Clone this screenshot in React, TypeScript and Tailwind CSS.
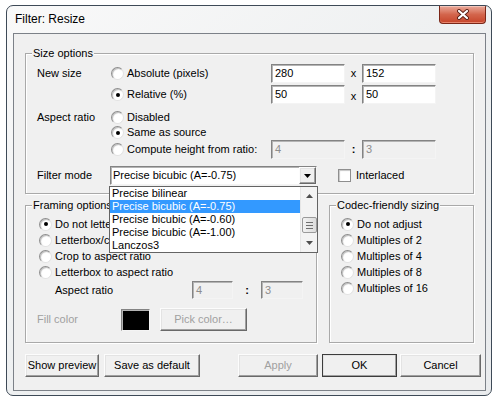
import clsx from 'clsx';
import type { ReactNode } from 'react';

const sunken =
  'border border-t-[#838383] border-l-[#838383] border-r-[#f4f4f4] border-b-[#f4f4f4] shadow-[inset_1px_1px_0_#b4b4b4]';
const raised =
  'border border-t-[#fcfcfc] border-l-[#fcfcfc] border-r-[#696969] border-b-[#696969] shadow-[inset_-1px_-1px_0_#a0a0a0,inset_1px_1px_0_#e3e3e3] bg-[#f0f0f0]';

function Radio({ checked }: { checked?: boolean }) {
  return (
    <span className="w-[13px] h-[13px] rounded-full border border-t-[#8e8e8e] border-l-[#8e8e8e] border-r-[#e2e2e2] border-b-[#e2e2e2] bg-white shadow-[inset_1px_1px_1px_#bdbdbd] flex items-center justify-center shrink-0">
      {checked && <span className="w-[4px] h-[4px] rounded-full bg-black" />}
    </span>
  );
}

function RadioRow({ label, checked, className }: { label: string; checked?: boolean; className?: string }) {
  return (
    <span className={clsx('flex items-center gap-[3px] whitespace-nowrap', className)}>
      <Radio checked={checked} />
      <span>{label}</span>
    </span>
  );
}

function Field({ value, disabled, className }: { value: string; disabled?: boolean; className?: string }) {
  return (
    <span
      className={clsx(
        'flex items-center pl-[3px] shrink-0',
        sunken,
        disabled ? 'bg-[#f0f0f0] text-[#8d8d8d]' : 'bg-white',
        className,
      )}
    >
      {value}
    </span>
  );
}

function Group({ title, className, children }: { title: string; className?: string; children: ReactNode }) {
  return (
    <div className={clsx('relative border border-[#a9a9a9] shadow-[inset_1px_1px_0_#fff,1px_1px_0_#fff] shrink-0', className)}>
      <span className="absolute left-[6px] -top-[8px] px-[1px] bg-[#f0f0f0] leading-[14px] whitespace-nowrap">{title}</span>
      {children}
    </div>
  );
}

function Button({ children, className, disabled }: { children: ReactNode; className?: string; disabled?: boolean }) {
  return (
    <button className={clsx('h-[23px] flex items-center justify-center shrink-0', raised, disabled && 'text-[#a0a0a0]', className)}>
      {children}
    </button>
  );
}

function Arrow({ up }: { up?: boolean }) {
  return (
    <svg width="7" height="4" viewBox="0 0 7 4">
      <path d={up ? 'M0 4 L3.5 0 L7 4 Z' : 'M0 0 L7 0 L3.5 4 Z'} fill="#4d4d4d" />
    </svg>
  );
}

const modes = [
  'Precise bilinear',
  'Precise bicubic (A=-0.75)',
  'Precise bicubic (A=-0.60)',
  'Precise bicubic (A=-1.00)',
  'Lanczos3',
];

export default function App() {
  return (
    <div className="w-[498px] h-[399px] bg-white pl-[6px] pt-[5px] font-['Liberation_Sans',Arial,sans-serif] text-[11px] text-black leading-[13px]">
      <div className="w-[486px] h-[391px] rounded-[7px] border border-[#3e4a57] bg-gradient-to-br from-[#f9f9f9] via-[#eef0f1] to-[#e9ebed] overflow-hidden">
        {/* title bar */}
        <div className="h-[27px] flex items-start justify-between">
          <span className="pl-[8px] text-[12px] leading-[27px]">Filter: Resize</span>
          <div className="mr-[5px] w-[47px] h-[18px] rounded-b-[4px] border border-t-0 border-[#7a2617] bg-gradient-to-b from-[#e9a99a] via-[#d3654c] to-[#c64328] shadow-[inset_0_-1px_0_#e7856d,inset_0_1px_0_#f2c5ba] flex items-center justify-center">
            <svg width="14" height="11" viewBox="0 0 14 11">
              <path d="M3 2 L11 9 M11 2 L3 9" stroke="#5b1f15" strokeWidth="4" strokeLinecap="round" />
              <path d="M3 2 L11 9 M11 2 L3 9" stroke="#ffffff" strokeWidth="2.2" strokeLinecap="round" />
            </svg>
          </div>
        </div>

        {/* client area */}
        <div className="ml-[6px] w-[473px] h-[358px] border border-[#7c8188] bg-[#f0f0f0]">
          <Group title="Size options" className="ml-[11px] mt-[19px] w-[449px] h-[141px]">
            <div className="pt-[10px] pl-[11px]">
              <div className="flex items-center h-[19px]">
                <span className="w-[74px] shrink-0">New size</span>
                <RadioRow label="Absolute (pixels)" className="w-[160px] shrink-0" />
                <Field value="280" className="w-[74px] h-[19px]" />
                <span className="w-[17px] text-center shrink-0">x</span>
                <Field value="152" className="w-[74px] h-[19px]" />
              </div>
              <div className="flex items-center h-[19px] mt-[2px]">
                <span className="w-[74px] shrink-0" />
                <RadioRow label="Relative (%)" checked className="w-[160px] shrink-0" />
                <Field value="50" className="w-[74px] h-[19px]" />
                <span className="w-[17px] text-center shrink-0 pt-[3px]">x</span>
                <Field value="50" className="w-[74px] h-[19px]" />
              </div>
              <div className="flex items-center h-[16px] mt-[5px]">
                <span className="w-[74px] shrink-0">Aspect ratio</span>
                <RadioRow label="Disabled" />
              </div>
              <div className="flex items-center h-[15px]">
                <span className="w-[74px] shrink-0" />
                <RadioRow label="Same as source" checked />
              </div>
              <div className="flex items-center h-[19px]">
                <span className="w-[74px] shrink-0" />
                <RadioRow label="Compute height from ratio:" className="w-[160px] shrink-0" />
                <Field value="4" disabled className="w-[74px] h-[19px]" />
                <span className="w-[17px] text-center shrink-0 font-bold">:</span>
                <Field value="3" disabled className="w-[74px] h-[19px]" />
              </div>
              <div className="flex items-center h-[19px] mt-[7px]">
                <span className="w-[73px] shrink-0">Filter mode</span>
                <div className={clsx('relative w-[207px] h-[19px] bg-white flex items-center shrink-0', sunken)}>
                  <span className="pl-[2px] flex-1 whitespace-nowrap">Precise bicubic (A=-0.75)</span>
                  <span className={clsx('w-[17px] h-[17px] flex items-center justify-center', raised)}>
                    <svg width="7" height="4" viewBox="0 0 7 4">
                      <path d="M0 0 L7 0 L3.5 4 Z" fill="#000" />
                    </svg>
                  </span>
                  {/* open dropdown list */}
                  <div className="absolute z-10 left-[-2px] top-[19px] w-[209px] h-[67px] border border-[#646464] bg-white flex">
                    <div className="w-[190px] shrink-0">
                      {modes.map((m, i) => (
                        <div
                          key={m}
                          className={clsx(
                            'h-[13px] pl-[2px] leading-[13px] whitespace-nowrap',
                            i === 1 && 'bg-[#3399ff] text-white',
                          )}
                        >
                          {m}
                        </div>
                      ))}
                    </div>
                    <div className="w-[17px] h-full bg-[#f3f3f3] border-l border-[#e6e6e6] flex flex-col items-center">
                      <span className="h-[17px] flex items-center justify-center">
                        <Arrow up />
                      </span>
                      <span className="h-[13px]" />
                      <span className="w-[15px] h-[16px] rounded-[2px] border border-[#9a9a9a] bg-gradient-to-r from-[#f2f2f2] to-[#dcdcdc] flex flex-col items-center justify-center gap-[2px]">
                        <span className="w-[7px] h-px bg-[#6f6f6f]" />
                        <span className="w-[7px] h-px bg-[#6f6f6f]" />
                        <span className="w-[7px] h-px bg-[#6f6f6f]" />
                      </span>
                      <span className="flex-1 flex items-center justify-center">
                        <Arrow />
                      </span>
                    </div>
                  </div>
                </div>
                <span className="ml-[21px] w-[13px] h-[13px] bg-white border border-[#8e8e8e] shadow-[inset_1px_1px_1px_#c6c6c6] shrink-0" />
                <span className="ml-[5px]">Interlaced</span>
              </div>
            </div>
          </Group>

          <div className="flex mt-[11px] ml-[11px]">
            <Group title="Framing options" className="w-[292px] h-[138px]">
              <div className="pt-[10px] pl-[11px]">
                <RadioRow label="Do not letterbox" checked className="h-[16px] ml-[2px]" />
                <RadioRow label="Letterbox/crop to size" className="h-[16px] ml-[2px]" />
                <RadioRow label="Crop to aspect ratio" className="h-[16px] ml-[2px]" />
                <RadioRow label="Letterbox to aspect ratio" className="h-[16px] ml-[2px]" />
                <div className="flex items-center h-[18px] mt-[1px]">
                  <span className="ml-[18px] w-[137px] shrink-0">Aspect ratio</span>
                  <Field value="4" disabled className="w-[41px] h-[18px]" />
                  <span className="w-[28px] text-center font-bold shrink-0">:</span>
                  <Field value="3" disabled className="w-[42px] h-[18px]" />
                </div>
                <div className="flex items-center h-[23px] mt-[9px]">
                  <span className="w-[84px] shrink-0 text-[#a0a0a0]">Fill color</span>
                  <span className={clsx('w-[29px] h-[22px] bg-black shrink-0', sunken)} />
                  <Button disabled className="ml-[10px] w-[87px]">Pick color…</Button>
                </div>
              </div>
            </Group>
            <Group title="Codec-friendly sizing" className="ml-[12px] w-[145px] h-[138px]">
              <div className="pt-[10px] pl-[11px]">
                <RadioRow label="Do not adjust" checked className="h-[16px]" />
                <RadioRow label="Multiples of 2" className="h-[16px]" />
                <RadioRow label="Multiples of 4" className="h-[16px]" />
                <RadioRow label="Multiples of 8" className="h-[16px]" />
                <RadioRow label="Multiples of 16" className="h-[16px]" />
              </div>
            </Group>
          </div>

          <div className="flex mt-[11px] ml-[11px] w-[456px]">
            <Button className="w-[74px]">Show preview</Button>
            <Button className="ml-[5px] w-[96px]">Save as default</Button>
            <Button disabled className="ml-auto w-[80px]">Apply</Button>
            <Button className="ml-[4px] w-[75px] outline outline-1 outline-[#3c3c3c] -outline-offset-1">OK</Button>
            <Button className="ml-[3px] w-[81px]">Cancel</Button>
          </div>
        </div>
      </div>
    </div>
  );
}
